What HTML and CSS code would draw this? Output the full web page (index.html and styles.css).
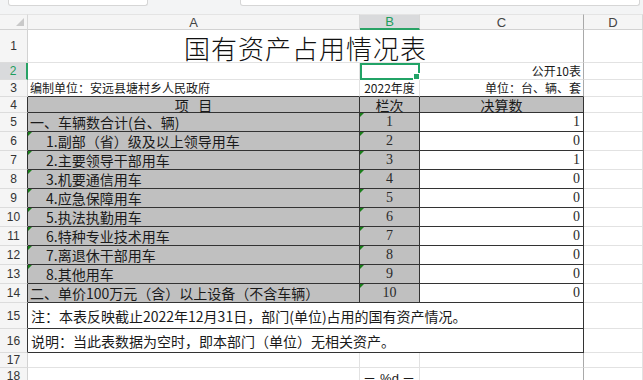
FILE: index.html
```html
<!DOCTYPE html>
<html lang="zh-CN">
<head>
<meta charset="utf-8">
<title>国有资产占用情况表</title>
<link rel="stylesheet" href="styles.css">
</head>
<body>
<div class="topbar">
  <div class="fbox name-box"></div>
  <div class="fbox formula-box"></div>
</div>
<div class="sheet">
  <!-- column headers -->
  <div class="c ch corner"><span class="tri"></span></div>
  <div class="c ch">A</div>
  <div class="c ch sel">B</div>
  <div class="c ch pb">C</div>
  <div class="c ch">D</div>

  <!-- row 1 -->
  <div class="c rh">1</div>
  <div class="c title"><span class="title-text">国有资产占用情况表</span></div>
  <div class="c"></div>

  <!-- row 2 -->
  <div class="c rh rsel">2</div>
  <div class="c"></div>
  <div class="c active"></div>
  <div class="c right small pb">公开10表</div>
  <div class="c"></div>

  <!-- row 3 -->
  <div class="c rh">3</div>
  <div class="c small tb">编制单位：安远县塘村乡人民政府</div>
  <div class="c small center tb">2022年度</div>
  <div class="c small right tb tr">单位：台、辆、套</div>
  <div class="c"></div>

  <!-- row 4 -->
  <div class="c rh tl">4</div>
  <div class="c gray center tb trr">项&nbsp;&nbsp;&nbsp;目</div>
  <div class="c gray center tb trr">栏次</div>
  <div class="c gray center tb trr">决算数</div>
  <div class="c"></div>

  <!-- row 5 -->
  <div class="c rh tl">5</div>
  <div class="c gray tb trr">一、车辆数合计(台、辆)</div>
  <div class="c gray center num tb trr mark">1</div>
  <div class="c right num tb trr">1</div>
  <div class="c"></div>

  <div class="c rh tl">6</div>
  <div class="c gray tb trr sub mark">1.副部（省）级及以上领导用车</div>
  <div class="c gray center num tb trr mark">2</div>
  <div class="c right num tb trr">0</div>
  <div class="c"></div>

  <div class="c rh tl">7</div>
  <div class="c gray tb trr sub mark">2.主要领导干部用车</div>
  <div class="c gray center num tb trr mark">3</div>
  <div class="c right num tb trr">1</div>
  <div class="c"></div>

  <div class="c rh tl">8</div>
  <div class="c gray tb trr sub mark">3.机要通信用车</div>
  <div class="c gray center num tb trr mark">4</div>
  <div class="c right num tb trr">0</div>
  <div class="c"></div>

  <div class="c rh tl">9</div>
  <div class="c gray tb trr sub mark">4.应急保障用车</div>
  <div class="c gray center num tb trr mark">5</div>
  <div class="c right num tb trr">0</div>
  <div class="c"></div>

  <div class="c rh tl">10</div>
  <div class="c gray tb trr sub mark">5.执法执勤用车</div>
  <div class="c gray center num tb trr mark">6</div>
  <div class="c right num tb trr">0</div>
  <div class="c"></div>

  <div class="c rh tl">11</div>
  <div class="c gray tb trr sub mark">6.特种专业技术用车</div>
  <div class="c gray center num tb trr mark">7</div>
  <div class="c right num tb trr">0</div>
  <div class="c"></div>

  <div class="c rh tl">12</div>
  <div class="c gray tb trr sub mark">7.离退休干部用车</div>
  <div class="c gray center num tb trr mark">8</div>
  <div class="c right num tb trr">0</div>
  <div class="c"></div>

  <div class="c rh tl">13</div>
  <div class="c gray tb trr sub mark">8.其他用车</div>
  <div class="c gray center num tb trr mark">9</div>
  <div class="c right num tb trr">0</div>
  <div class="c"></div>

  <div class="c rh tl">14</div>
  <div class="c gray tb trr">二、单价100万元（含）以上设备（不含车辆）</div>
  <div class="c gray center num tb trr mark">10</div>
  <div class="c right num tb trr">0</div>
  <div class="c"></div>

  <!-- row 15 -->
  <div class="c rh tl">15</div>
  <div class="c note tb trr">注：本表反映截止2022年12月31日，部门(单位)占用的国有资产情况。</div>
  <div class="c"></div>

  <!-- row 16 -->
  <div class="c rh tl">16</div>
  <div class="c note tb trr">说明：当此表数据为空时，即本部门（单位）无相关资产。</div>
  <div class="c"></div>

  <!-- row 17 -->
  <div class="c rh">17</div>
  <div class="c"></div>
  <div class="c"></div>
  <div class="c pb"></div>
  <div class="c"></div>

  <!-- row 18 -->
  <div class="c rh">18</div>
  <div class="c"></div>
  <div class="c footer">－ %d －</div>
  <div class="c pb"></div>
  <div class="c"></div>
</div>
</body>
</html>
```

FILE: styles.css
```css
* { box-sizing: border-box; }
html, body {
  margin: 0;
  padding: 0;
  width: 643px;
  height: 380px;
  overflow: hidden;
  background: #ffffff;
  font-family: "Noto Sans CJK SC", "Liberation Sans", sans-serif;
  color: #1a1a1a;
}

.topbar {
  height: 14px;
  background: #f3f4f5;
  display: flex;
  align-items: flex-start;
}
.fbox {
  height: 6px;
  background: #ffffff;
  border: 1px solid #d6d6d6;
  border-top: none;
  border-radius: 0 0 3px 3px;
}
.name-box { margin-left: 8px; width: 140px; }
.formula-box { margin-left: 92px; width: 400px; }

.sheet {
  display: grid;
  grid-template-columns: 28px 332px 60px 164px 59px;
  grid-template-rows: 16px 33px 17px 17px 16px repeat(10, 19px) 26px 24px 15px 16px;
}

.c {
  border-right: 1px solid #e2e2e2;
  border-bottom: 1px solid #e2e2e2;
  display: flex;
  align-items: center;
  font-size: 14px;
  line-height: 1;
  white-space: nowrap;
  padding: 0 2px;
  position: relative;
  min-width: 0;
}

.ch {
  background: #f5f5f5;
  border-top: 1px solid #e4e4e4;
  border-right-color: #d8d8d8;
  border-bottom-color: #d2d2d2;
  justify-content: center;
  font-family: "Liberation Sans", sans-serif;
  font-size: 13px;
  color: #444;
}
.corner { justify-content: flex-end; align-items: flex-end; padding: 0 3px 3px 0; }
.tri {
  width: 0; height: 0;
  border-left: 8px solid transparent;
  border-bottom: 8px solid #c9c9c9;
}
.ch.sel {
  background: #d9dadc;
  color: #1f9d5c;
  border-bottom: 2px solid #28a265;
}

.rh {
  background: #f5f5f5;
  justify-content: center;
  font-family: "Liberation Sans", sans-serif;
  font-size: 12px;
  color: #333;
  border-right-color: #d2d2d2;
  border-bottom-color: #dcdcdc;
  padding: 0;
}
.rh.rsel {
  background: #d9dadc;
  color: #1f9d5c;
  border-right: 2px solid #28a265;
}
.rh.tl { border-right-color: #333; }

.title {
  grid-column: 2 / 5;
  justify-content: center;
  font-size: 26px;
  font-weight: 300;
  color: #111;
  padding-top: 3px;
  border-right-color: #a9a9a9;
}
.title-text { letter-spacing: 1px; line-height: 1; }

.small { font-size: 12px; }
.center { justify-content: center; }
.right { justify-content: flex-end; }
.pb { border-right-color: #a9a9a9; }

.tb { border-bottom-color: #333; }
.trr { border-right-color: #333; }
.tr { border-right-color: #a9a9a9; }

.gray { background: #c0c0c0; }
.sub { padding-left: 18px; }
.num {
  font-family: "Liberation Serif", "DejaVu Serif", serif;
  font-size: 14px;
  color: #2a2a2a;
}
.right.num { padding-right: 3px; }

.mark::before {
  content: "";
  position: absolute;
  left: 0;
  top: 0;
  width: 0; height: 0;
  border-top: 4px solid #1a7f1a;
  border-right: 4px solid transparent;
}

.note {
  grid-column: 2 / 5;
  background: #ffffff;
  font-size: 14px;
  padding-left: 3px;
}

.active {
  border: 2px solid #21a366;
}
.active::after {
  content: "";
  position: absolute;
  right: -2px;
  bottom: -2px;
  width: 5px;
  height: 5px;
  background: #21a366;
  border: 1px solid #ffffff;
}

.footer {
  justify-content: center;
  align-items: flex-start;
  padding-top: 4px;
  font-size: 13px;
  font-family: "Liberation Sans", sans-serif;
}
```
